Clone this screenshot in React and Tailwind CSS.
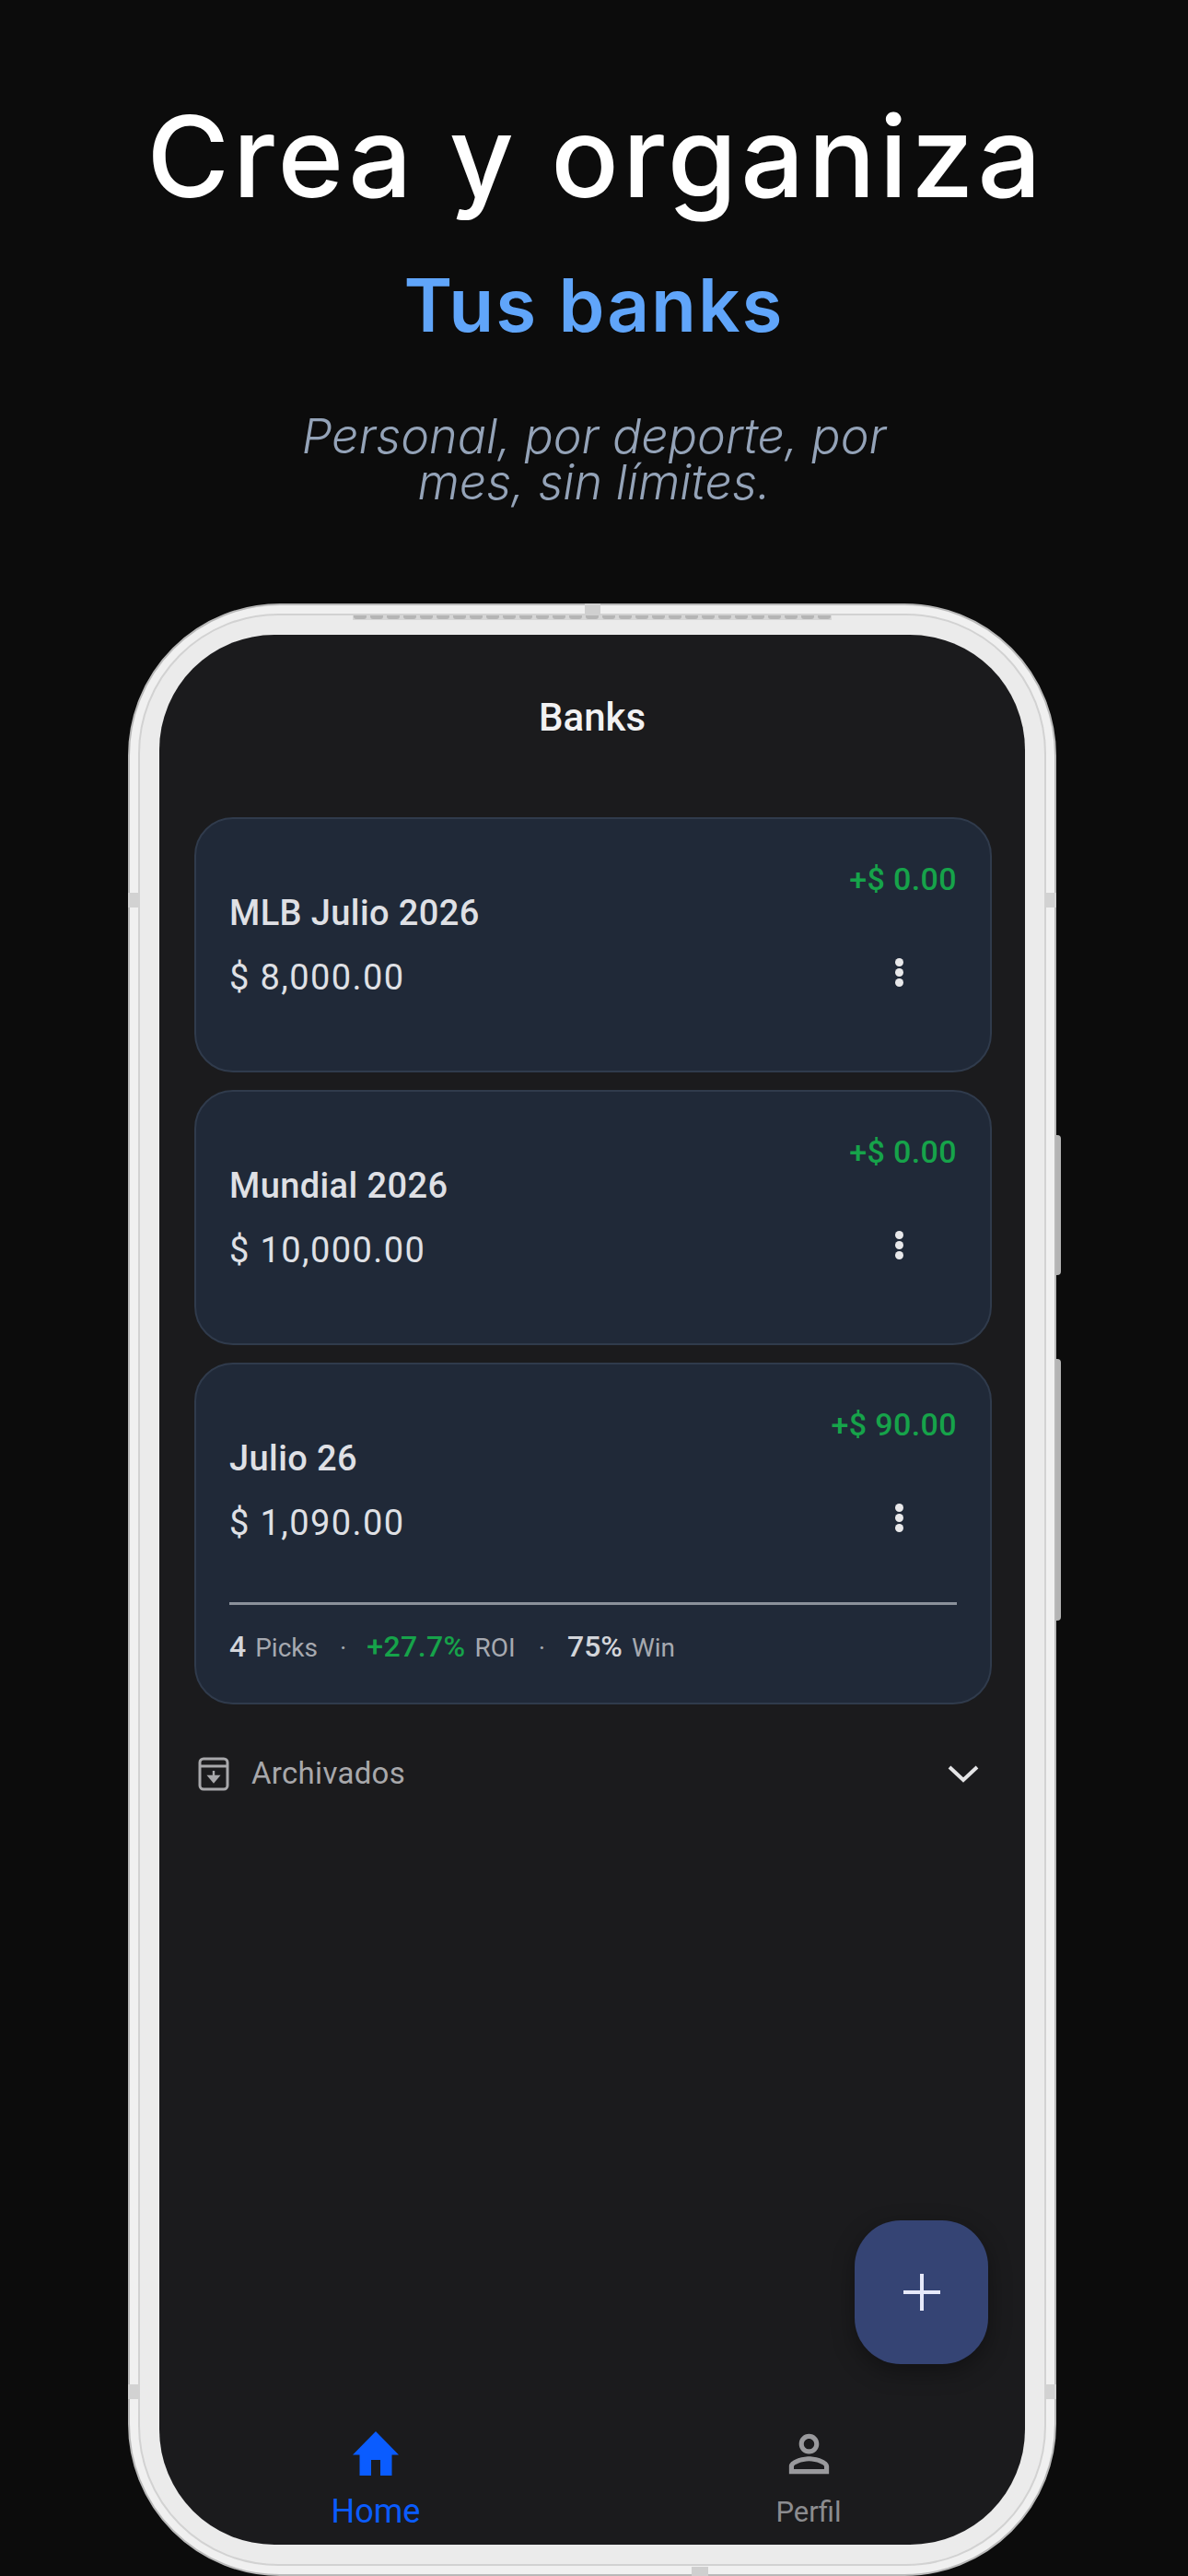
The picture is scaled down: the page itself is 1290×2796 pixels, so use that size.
import React from "react";

const sans = "font-['Roboto',sans-serif]";
const GREEN = "text-[#16a34a]";

function Dots() {
  return (
    <div className="flex flex-col gap-[2px] items-center mr-[58px] mb-[10px]">
      <span className="w-[9px] h-[9px] rounded-full bg-[#e8e8ea]" />
      <span className="w-[9px] h-[9px] rounded-full bg-[#e8e8ea]" />
      <span className="w-[9px] h-[9px] rounded-full bg-[#e8e8ea]" />
    </div>
  );
}

function Card({ name, amount, profit, stats }) {
  return (
    <div className={`rounded-[42px] border-2 border-[#303b4c] bg-[#202938] px-[36px] pt-[47px] ${stats ? "pb-[39px]" : "pb-[81px]"}`}>
      <div className={`text-right text-[34px] leading-[36px] tracking-[0.4px] font-medium ${GREEN}`}>{profit}</div>
      <div className="flex items-end justify-between mt-[1px]">
        <div>
          <div className="text-[38px] leading-[36px] font-medium tracking-[0.4px] text-[#dfe0e5]">{name}</div>
          <div className="text-[38px] leading-[40px] mt-[32px] text-[#dfe0e5] tracking-[1.4px]">{amount}</div>
        </div>
        <Dots />
      </div>
      {stats && (
        <>
          <div className="h-[3px] bg-[#8b919b] mt-[66px]" />
          <div className="flex items-baseline mt-[25px] leading-[40px] text-[#a6a9b0] text-[28px]">
            <span className="font-medium text-[32px] text-[#d3d5da]">4</span>
            <span className="ml-[10px]">Picks</span>
            <span className="ml-[24px]">·</span>
            <span className={`ml-[22px] font-medium text-[32px] tracking-[0.4px] ${GREEN}`}>+27.7%</span>
            <span className="ml-[10px]">ROI</span>
            <span className="ml-[25px]">·</span>
            <span className="ml-[24px] font-medium text-[32px] text-[#d3d5da]">75%</span>
            <span className="ml-[10px]">Win</span>
          </div>
        </>
      )}
    </div>
  );
}

function ArchiveIcon() {
  return (
    <svg width="34" height="37" viewBox="0 0 34 37" fill="none" className="shrink-0">
      <rect x="2" y="2" width="30" height="33" rx="4" stroke="#a8a8ab" strokeWidth="3" />
      <path d="M2 10h30" stroke="#a8a8ab" strokeWidth="3" />
      <path d="M17 15v9M12 21h10l-5 6z" stroke="#a8a8ab" strokeWidth="2.4" fill="#a8a8ab" />
    </svg>
  );
}

function Chevron() {
  return (
    <svg width="34" height="20" viewBox="0 0 34 20" fill="none">
      <path d="M2 3l15 14L32 3" stroke="#e4e4e6" strokeWidth="4" />
    </svg>
  );
}

function Speaker() {
  return (
    <div className="absolute left-[242px] top-[11px] w-[520px] h-[5px] flex gap-[4px] justify-center overflow-hidden bg-[#d6d6d6]">
      {Array.from({ length: 29 }).map((_, i) => (
        <span key={i} className="w-[14px] h-[4px] shrink-0 rounded-b-[3px] bg-[#b5b5b5]" />
      ))}
    </div>
  );
}

export default function App() {
  return (
    <div className="w-[1290px] h-[2796px] overflow-hidden bg-[#0c0c0c] font-['Inter',sans-serif]">
      <h1 className="pt-[110px] pl-[4px] text-center text-[122px] leading-[120px] font-medium tracking-[3.9px] text-white">Crea y organiza</h1>
      <h2 className="mt-[56px] text-center text-[80px] leading-[90px] font-semibold tracking-[2px] text-[#60a5fa]">Tus banks</h2>
      <p className="mt-[73px] text-center text-[52px] leading-[50px] italic font-light text-[#94a3b8]">
        Personal, por deporte, por
        <br />
        mes, sin límites.
      </p>

      <div className="relative mt-[106px] ml-[139px] w-[1008px] h-[2141px] rounded-[165px] border-2 border-[#b9b9b9] bg-[#f0f0f0] p-[9px]">
        <div className="w-full h-full rounded-[152px] border-2 border-[#d2d2d2] bg-[#ebebeb] p-[21px]">
          <div className={`relative flex flex-col w-full h-full rounded-[125px] overflow-hidden bg-[#1b1b1d] ${sans}`}>
            <div className="pt-[65px] text-center text-[42px] leading-[50px] font-medium text-[#f2f2f3]">Banks</div>
            <div className="mt-[83px] ml-[38px] mr-[36px] flex flex-col gap-[19px]">
              <Card name="MLB Julio 2026" amount="$ 8,000.00" profit="+$ 0.00" />
              <Card name="Mundial 2026" amount="$ 10,000.00" profit="+$ 0.00" />
              <Card name="Julio 26" amount="$ 1,090.00" profit="+$ 90.00" stats />
            </div>
            <div className="mt-[55px] mx-[42px] flex items-center">
              <ArchiveIcon />
              <span className="ml-[24px] text-[33px] tracking-[0.3px] leading-[40px] text-[#a8a8ab]">Archivados</span>
              <span className="ml-auto mr-[8px]"><Chevron /></span>
            </div>

            <div className="mt-auto grid grid-cols-2 h-[123px]">
              <div className="flex flex-col items-center">
                <svg width="50" height="48" viewBox="2 3 20 17" preserveAspectRatio="none">
                  <path d="M10 20v-6h4v6h5v-8h3L12 3 2 12h3v8z" fill="#0a5cff" />
                </svg>
                <span className="mt-[19px] text-[36px] leading-[40px] text-[#0a5cff]">Home</span>
              </div>
              <div className="flex flex-col items-center">
                <svg width="65" height="65" viewBox="0 0 24 24" className="-mt-[8px]">
                  <path d="M12 5.9c1.16 0 2.1.94 2.1 2.1s-.94 2.1-2.1 2.1S9.9 9.16 9.9 8s.94-2.1 2.1-2.1m0 9c2.97 0 6.1 1.46 6.1 2.1v1.1H5.9V17c0-.64 3.13-2.1 6.1-2.1M12 4C9.79 4 8 5.79 8 8s1.79 4 4 4 4-1.79 4-4-1.79-4-4-4zm0 9c-2.67 0-8 1.34-8 4v3h16v-3c0-2.66-5.33-4-8-4z" fill="#9a9a9d" />
                </svg>
                <span className="mt-[13px] text-[31px] leading-[36px] text-[#8c8c8f]">Perfil</span>
              </div>
            </div>

            <div className="absolute right-[40px] bottom-[196px] w-[145px] h-[156px] rounded-[50px] bg-[#354474] shadow-[0_8px_24px_rgba(0,0,0,0.35)] flex items-center justify-center">
              <svg width="40" height="40" viewBox="0 0 40 40">
                <path d="M20 0v40M0 20h40" stroke="#e6e9fa" strokeWidth="4" />
              </svg>
            </div>
          </div>
        </div>

        <Speaker />
        <span className="absolute left-[494px] -top-[2px] w-[17px] h-[13px] bg-[#d0d0d0]" />
        <span className="absolute left-[610px] bottom-[-2px] w-[18px] h-[10px] bg-[#cfcfcf]" />
        <span className="absolute -left-[2px] top-[312px] w-[12px] h-[16px] bg-[#d2d2d2]" />
        <span className="absolute -right-[2px] top-[312px] w-[12px] h-[16px] bg-[#d2d2d2]" />
        <span className="absolute -left-[2px] bottom-[190px] w-[12px] h-[16px] bg-[#d2d2d2]" />
        <span className="absolute -right-[2px] bottom-[190px] w-[12px] h-[16px] bg-[#d2d2d2]" />
        <span className="absolute -right-[7px] top-[575px] w-[5px] h-[152px] rounded-r-[4px] bg-[#b4b4b4]" />
        <span className="absolute -right-[7px] top-[818px] w-[5px] h-[284px] rounded-r-[4px] bg-[#b4b4b4]" />
      </div>
    </div>
  );
}
